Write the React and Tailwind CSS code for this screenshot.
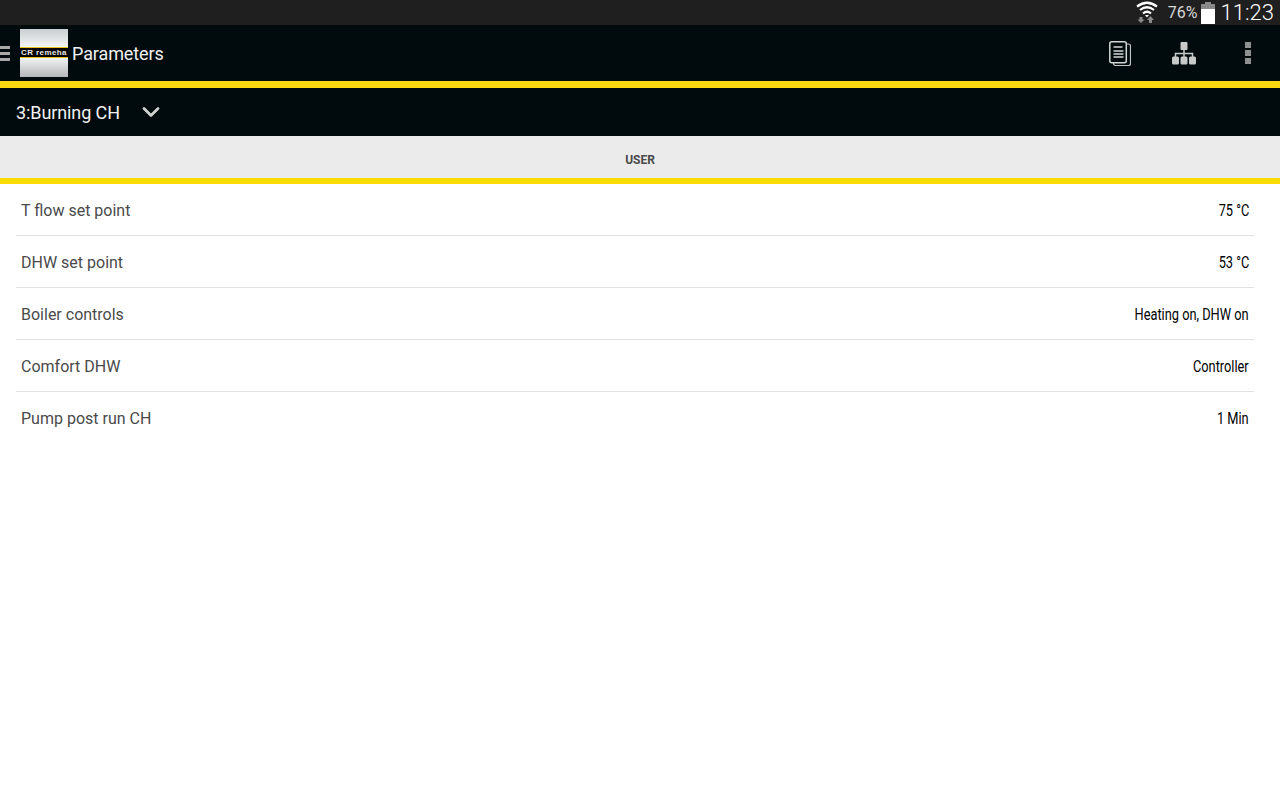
import React from "react";
import { ChevronDown } from "lucide-react";

const rows = [
  { label: "T flow set point", value: "75 °C" },
  { label: "DHW set point", value: "53 °C" },
  { label: "Boiler controls", value: "Heating on, DHW on" },
  { label: "Comfort DHW", value: "Controller" },
  { label: "Pump post run CH", value: "1 Min" },
];

function WifiIcon() {
  return (
    <svg width="22" height="24" viewBox="0 0 22 24" className="block">
      <g fill="none" stroke="#fff" strokeWidth="2.200">
        <path d="M1 5.500 Q11 -2 21 5.500" />
        <path d="M4 9 Q11 3.500 18 9" />
        <path d="M7 12.500 Q11 9 15 12.500" />
      </g>
      <path d="M9 14 L11 16.500 L13 14 Z" fill="#fff" />
      <path d="M5 16 L8.500 19.500 H6.500 V22 H3.500 V19.500 H1.500 Z" fill="#8a8a8a" transform="rotate(180 5 19)" />
      <path d="M13 22 V19 H11 L14.500 15 L18 19 H16 V22 Z" fill="#8a8a8a" />
    </svg>
  );
}

function BatteryIcon() {
  return (
    <div className="flex flex-col items-center w-[14px]">
      <div className="w-[6px] h-[2px] bg-[#8a8a8a]" />
      <div className="w-[14px] h-[5px] bg-[#8a8a8a]" />
      <div className="w-[14px] h-[15px] bg-white" />
    </div>
  );
}

function PagesIcon() {
  return (
    <svg width="22" height="25" viewBox="0 0 22 25" className="block">
      <rect x="4.500" y="3" width="17" height="21.500" rx="2" fill="none" stroke="#c4c6c6" strokeWidth="1.200" />
      <rect x="0.800" y="0.800" width="16.500" height="21" rx="2" fill="#010b0e" stroke="#d4d6d6" strokeWidth="1.500" />
      <path d="M4.500 6h9M4.500 10h10M4.500 13h10M4.500 16h10" stroke="#d4d6d6" strokeWidth="1.600" />
    </svg>
  );
}

function HierarchyIcon() {
  return (
    <svg width="24" height="23" viewBox="0 0 24 23" className="block">
      <rect x="8.500" y="0" width="7" height="8" rx="1" fill="#c8caca" />
      <path d="M12 8v7M3.500 15v-3.500h17V15" fill="none" stroke="#c8caca" strokeWidth="1.500" />
      <rect x="0" y="14.500" width="7" height="8" rx="1.500" fill="#c8caca" />
      <rect x="8.500" y="14.500" width="7" height="8" rx="1.500" fill="#c8caca" />
      <rect x="17" y="14.500" width="7" height="8" rx="1.500" fill="#c8caca" />
    </svg>
  );
}

function Logo() {
  return (
    <div className="w-12 h-12 flex flex-col shrink-0">
      <div className="h-[18px] bg-gradient-to-b from-[#c9ced2] to-[#f4f5f5]" />
      <div className="h-[11px] bg-black border-y border-[#e6c21a] flex items-center justify-center overflow-hidden">
        <span className="text-[8px] leading-none font-bold text-[#e8e8e8] whitespace-nowrap tracking-[0.4px] font-['Liberation_Sans',sans-serif]">
          CR remeha
        </span>
      </div>
      <div className="h-[19px] bg-gradient-to-b from-[#f2f3f3] to-[#b4b8ba]" />
    </div>
  );
}

export default function App() {
  return (
    <div className="w-[1280px] h-[800px] bg-white overflow-hidden font-['Roboto',sans-serif]">
      {/* Status bar */}
      <div className="h-[25px] bg-[#1f1f1f] flex items-center justify-end pr-[6px]">
        <WifiIcon />
        <span className="ml-[10px] text-[16px] text-[#d8d8d8] leading-none">76%</span>
        <div className="ml-[3px]">
          <BatteryIcon />
        </div>
        <span className="ml-[6px] text-[22px] font-light text-white leading-none">11:23</span>
      </div>

      {/* Action bar */}
      <div className="h-[56px] bg-[#010b0e] flex items-center">
        <div className="w-[10px] flex flex-col gap-[3px]">
          <div className="h-[3px] bg-[#a8a8a8]" />
          <div className="h-[3px] bg-[#a8a8a8]" />
          <div className="h-[3px] bg-[#a8a8a8]" />
        </div>
        <div className="ml-[10px]">
          <Logo />
        </div>
        <span className="ml-[4px] text-[18px] tracking-[-0.1px] text-[#f2f2f2]">Parameters</span>
        <div className="ml-auto flex items-center">
          <PagesIcon />
          <div className="ml-[41px]">
            <HierarchyIcon />
          </div>
          <div className="ml-[49px] mr-[29px] flex flex-col gap-[2px]">
            <div className="w-[6px] h-[6px] bg-[#8f9191]" />
            <div className="w-[6px] h-[6px] bg-[#8f9191]" />
            <div className="w-[6px] h-[6px] bg-[#8f9191]" />
          </div>
        </div>
      </div>
      <div className="h-[7px] bg-[#f9d90f]" />

      {/* Spinner */}
      <div className="h-[48px] bg-[#010b0e] flex items-center pl-4">
        <span className="text-[18px] tracking-[-0.1px] text-[#f2f2f2]">3:Burning CH</span>
        <ChevronDown size={28} strokeWidth={2.400} className="ml-[17px] text-[#d0d2d2]" />
      </div>

      {/* Tab */}
      <div className="h-[42px] bg-[#ebebeb] flex items-center justify-center pt-[6px]">
        <span className="text-[12px] font-bold text-[#4a4a4a]">USER</span>
      </div>
      <div className="h-[6px] bg-[#ffdc00]" />

      {/* Rows */}
      <div className="pl-4 pr-[26px]">
        {rows.map((row, i) => (
          <div
            key={row.label}
            className={`h-[52px] flex items-center justify-between pl-[5px] pr-[5px] pt-[2px] ${
              i < rows.length - 1 ? "border-b border-[#e2e2e2]" : ""
            }`}
          >
            <span className="text-[16px] text-[#4a4a4a]">{row.label}</span>
            <span className="text-[16px] text-black whitespace-nowrap origin-right scale-x-[0.8]">{row.value}</span>
          </div>
        ))}
      </div>
    </div>
  );
}
